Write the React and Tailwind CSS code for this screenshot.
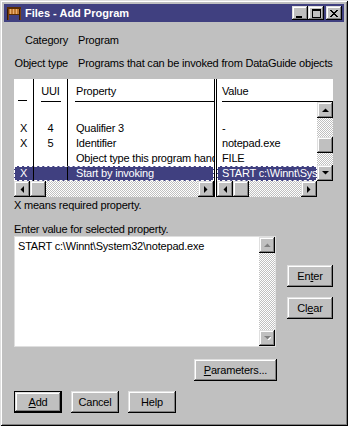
import React from 'react';

const bevel =
    'bg-[#c0c0c0] shadow-[inset_-1px_-1px_#000,inset_1px_1px_#dfdfdf,inset_-2px_-2px_#808080,inset_2px_2px_#fff]';
const checker =
    'bg-[repeating-conic-gradient(#c0c0c0_0_25%,#fff_0_50%)] bg-[length:2px_2px]';

function Arrow({ dir, disabled }) {
    const color = disabled ? '#808080' : '#000';
    const pts = {
        up: '0,4 7,4 3.5,0.5',
        down: '0,0 7,0 3.5,3.5',
        left: '4,0 4,7 0.5,3.5',
        right: '0,0 0,7 3.5,3.5',
    }[dir];
    const vert = dir === 'up' || dir === 'down';
    return (
        <svg width={vert ? 7 : 4} height={vert ? 4 : 7} viewBox={vert ? '0 0 7 4' : '0 0 4 7'}>
            {disabled && (
                <polygon points={pts} fill="#fff" transform="translate(1,1)" />
            )}
            <polygon points={pts} fill={color} />
        </svg>
    );
}

function ScrollBtn({ dir, disabled }) {
    return (
        <div className={`w-[16px] h-[16px] shrink-0 flex items-center justify-center ${bevel}`}>
            <Arrow dir={dir} disabled={disabled} />
        </div>
    );
}

function Thumb() {
    return <div className={`w-[16px] h-[16px] shrink-0 ${bevel}`} />;
}

function HScroll({ className = '' }) {
    return (
        <div className={`flex h-[16px] ${className}`}>
            <ScrollBtn dir="left" />
            <Thumb />
            <div className={`flex-1 ${checker}`} />
            <ScrollBtn dir="right" />
        </div>
    );
}

function Button({ children, className = '', isDefault }) {
    return (
        <div
            className={`h-[22px] flex items-center justify-center text-[11px] ${bevel} ${
                isDefault ? 'border border-black' : ''
            } ${className}`}
        >
            {children}
        </div>
    );
}

function TitleIcon() {
    return (
        <svg width="16" height="16" viewBox="0 0 16 16" shapeRendering="crispEdges">
            <rect x="1" y="2" width="14" height="2" fill="#5a2c00" />
            <rect x="3" y="4" width="10" height="5" fill="#c07830" />
            <rect x="4" y="4" width="1" height="5" fill="#e8b070" />
            <rect x="7" y="4" width="1" height="5" fill="#e8b070" />
            <rect x="10" y="4" width="1" height="5" fill="#e8b070" />
            <rect x="3" y="9" width="10" height="1" fill="#5a2c00" />
            <rect x="1" y="4" width="2" height="11" fill="#7a4010" />
            <rect x="13" y="4" width="2" height="11" fill="#7a4010" />
            <rect x="1" y="4" width="1" height="11" fill="#3a1a00" />
            <rect x="13" y="4" width="1" height="11" fill="#3a1a00" />
        </svg>
    );
}

function TitleBtn({ children }) {
    return (
        <div className={`w-[16px] h-[14px] flex items-center justify-center ${bevel}`}>
            {children}
        </div>
    );
}

const rows = [
    { req: 'X', uui: '4', prop: 'Qualifier 3', value: '-' },
    { req: 'X', uui: '5', prop: 'Identifier', value: 'notepad.exe' },
    { req: '', uui: '', prop: 'Object type this program handles', value: 'FILE' },
    { req: 'X', uui: '', prop: 'Start by invoking', value: 'START c:\\Winnt\\System32\\notepad.exe', selected: true },
];

const selClass =
    'bg-[#404080] text-white outline-1 outline-dashed outline-white -outline-offset-1';

function LeftRow({ row }) {
    return (
        <div className={`flex h-[15px] leading-[15px] ${row.selected ? selClass : ''}`}>
            <div className="w-[20px] border-r border-black text-center">{row.req}</div>
            <div className="w-[34px] border-r border-black text-center">{row.uui}</div>
            <div className="flex-1 pl-[8px] whitespace-nowrap overflow-hidden">{row.prop}</div>
        </div>
    );
}

export default function App() {
    return (
        <div className="w-[348px] h-[426px] bg-[#c0c0c0] p-[4px] font-['Liberation_Sans',Arial,sans-serif] text-black text-[11px] shadow-[inset_1px_1px_#dfdfdf,inset_-1px_-1px_#000,inset_2px_2px_#fff,inset_-2px_-2px_#808080]">
            <div className="h-[18px] bg-[#404080] flex items-center pl-[2px] pr-[2px]">
                <TitleIcon />
                <span className="ml-[3px] text-white font-bold text-[11px]">Files - Add Program</span>
                <div className="ml-auto flex items-center">
                    <TitleBtn>
                        <div className="w-[6px] h-[2px] bg-black mt-[7px] -ml-[2px]" />
                    </TitleBtn>
                    <TitleBtn>
                        <div className="w-[9px] h-[9px] border border-black border-t-2" />
                    </TitleBtn>
                    <div className="ml-[2px]">
                        <TitleBtn>
                            <svg width="8" height="7" viewBox="0 0 8 7" shapeRendering="crispEdges">
                                <path d="M0 0h2v1H0zM6 0h2v1H6zM1 1h2v1H1zM5 1h2v1H5zM2 2h4v1H2zM3 3h2v1H3zM2 4h4v1H2zM1 5h2v1H1zM5 5h2v1H5zM0 6h2v1H0zM6 6h2v1H6z" fill="#000" />
                            </svg>
                        </TitleBtn>
                    </div>
                </div>
            </div>

            <div className="pl-[10px] tracking-[-0.2px]">
                <div className="mt-[11px] flex leading-[14px]">
                    <div className="w-[54px] text-right whitespace-nowrap">Category</div>
                    <div className="ml-[10px]">Program</div>
                </div>
                <div className="mt-[9px] flex leading-[14px]">
                    <div className="w-[54px] text-right whitespace-nowrap flex justify-end">Object type</div>
                    <div className="ml-[10px] whitespace-nowrap">Programs that can be invoked from DataGuide objects</div>
                </div>

                <div className="mt-[9px] w-[319px] h-[118px] bg-white flex">
                    <div className="w-[201px] border-r border-black flex flex-col">
                        <div className="flex h-[23px]">
                            <div className="w-[20px] border-r border-black flex flex-col justify-end">
                                <div className="ml-[4px] w-[9px] h-px bg-black mb-[1px]" />
                            </div>
                            <div className="w-[34px] border-r border-black flex flex-col">
                                <div className="mt-[5px] leading-[14px] text-center">UUI</div>
                                <div className="mt-[3px] ml-[7px] w-[20px] h-px bg-black" />
                            </div>
                            <div className="flex-1 flex flex-col">
                                <div className="mt-[5px] leading-[14px] pl-[8px]">Property</div>
                                <div className="mt-[3px] ml-[7px] h-px bg-black" />
                            </div>
                        </div>
                        <div className="h-[79px] flex flex-col">
                            <div className="flex h-[19px]">
                                <div className="w-[20px] border-r border-black" />
                                <div className="w-[34px] border-r border-black" />
                            </div>
                            {rows.map((r) => (
                                <LeftRow key={r.prop} row={r} />
                            ))}
                        </div>
                        <HScroll />
                    </div>
                    <div className="w-[2px] bg-white" />
                    <div className="flex-1 border-l border-black flex flex-col">
                        <div className="h-[23px] flex flex-col">
                            <div className="mt-[5px] leading-[14px] pl-[5px]">Value</div>
                            <div className="mt-[3px] ml-[5px] h-px bg-black" />
                        </div>
                        <div className="h-[79px] flex">
                            <div className="w-[100px] flex flex-col">
                                <div className="h-[19px]" />
                                {rows.map((r) => (
                                    <div
                                        key={r.prop}
                                        className={`h-[15px] leading-[15px] pl-[5px] whitespace-nowrap overflow-hidden ${
                                            r.selected ? selClass : ''
                                        }`}
                                    >
                                        {r.value}
                                    </div>
                                ))}
                            </div>
                            <div className="w-[16px] flex flex-col">
                                <ScrollBtn dir="up" />
                                <div className={`h-[19px] ${checker}`} />
                                <Thumb />
                                <div className={`h-[12px] ${checker}`} />
                                <ScrollBtn dir="down" />
                            </div>
                        </div>
                        <div className="flex h-[16px]">
                            <HScroll className="w-[100px]" />
                            <div className="w-[16px] bg-[#c0c0c0]" />
                        </div>
                    </div>
                </div>

                <div className="mt-[1px] leading-[14px]">X means required property.</div>
                <div className="mt-[10px] leading-[14px]">Enter value for selected property.</div>

                <div className="flex">
                    <div className="w-[262px] h-[111px] bg-white border border-[#dfdfdf] flex">
                        <div className="flex-1 pl-[3px] pt-[2px] leading-[14px] whitespace-nowrap">
                            START c:\Winnt\System32\notepad.exe
                        </div>
                        <div className="w-[16px] flex flex-col">
                            <ScrollBtn dir="up" disabled />
                            <div className={`flex-1 ${checker}`} />
                            <ScrollBtn dir="down" disabled />
                        </div>
                    </div>
                    <div className="ml-[11px] mt-[29px] flex flex-col gap-[10px]">
                        <Button className="w-[46px]">
                            <span>
                                En<u className="underline-offset-1">t</u>er
                            </span>
                        </Button>
                        <Button className="w-[46px]">
                            <span>
                                Cl<u className="underline-offset-1">e</u>ar
                            </span>
                        </Button>
                    </div>
                </div>

                <div className="mt-[12px] w-[263px] flex justify-end">
                    <Button className="w-[83px]">
                        <span>
                            <u className="underline-offset-1">P</u>arameters...
                        </span>
                    </Button>
                </div>

                <div className="mt-[10px] flex gap-[9px]">
                    <Button className="w-[48px]" isDefault>
                        <span>
                            <u className="underline-offset-1">A</u>dd
                        </span>
                    </Button>
                    <Button className="w-[48px]">Cancel</Button>
                    <Button className="w-[48px]">Help</Button>
                </div>
            </div>
        </div>
    );
}
